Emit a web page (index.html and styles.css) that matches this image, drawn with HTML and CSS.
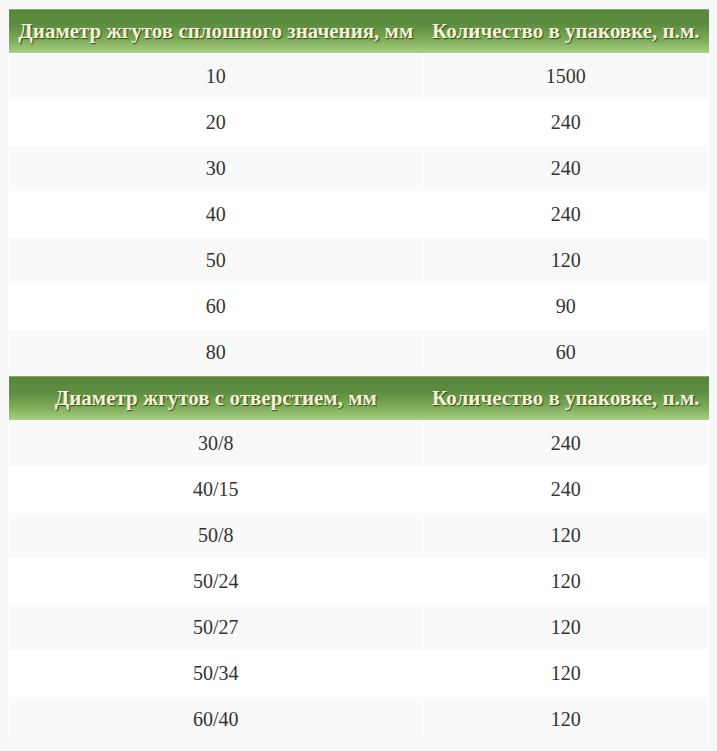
FILE: index.html
```html
<!DOCTYPE html>
<html lang="ru">
<head>
<meta charset="utf-8">
<title>Жгуты</title>
<link rel="stylesheet" href="styles.css">
</head>
<body>
<table class="spec">
  <tr class="head"><th>Диаметр жгутов сплошного значения, мм</th><th>Количество в упаковке, п.м.</th></tr>
  <tr class="odd"><td>10</td><td>1500</td></tr>
  <tr class="even"><td>20</td><td>240</td></tr>
  <tr class="odd"><td>30</td><td>240</td></tr>
  <tr class="even"><td>40</td><td>240</td></tr>
  <tr class="odd"><td>50</td><td>120</td></tr>
  <tr class="even"><td>60</td><td>90</td></tr>
  <tr class="odd"><td>80</td><td>60</td></tr>
  <tr class="head"><th>Диаметр жгутов с отверстием, мм</th><th>Количество в упаковке, п.м.</th></tr>
  <tr class="odd"><td>30/8</td><td>240</td></tr>
  <tr class="even"><td>40/15</td><td>240</td></tr>
  <tr class="odd"><td>50/8</td><td>120</td></tr>
  <tr class="even"><td>50/24</td><td>120</td></tr>
  <tr class="odd"><td>50/27</td><td>120</td></tr>
  <tr class="even"><td>50/34</td><td>120</td></tr>
  <tr class="odd"><td>60/40</td><td>120</td></tr>
</table>
</body>
</html>
```
FILE: styles.css
```css
html, body {
  margin: 0;
  padding: 0;
  background: #f7f7f7;
}
body {
  padding: 8px;
  font-family: "Liberation Serif", "Times New Roman", serif;
  color: #333;
}
.spec {
  border-collapse: collapse;
  width: 701px;
  background: #fff;
}
.spec th, .spec td {
  text-align: center;
  padding: 0 7px;
  border: 1px solid #fff;
}
.head th {
  height: 44px;
  font-size: 21px;
  font-weight: bold;
  color: #f4f2d6;
  text-shadow: 1px 1px 1px #2f4a1c;
  background: linear-gradient(to bottom, #56863a 0%, #5d8d40 35%, #7eab5a 70%, #a9d283 100%);
  border-left: none;
  border-right: none;
  white-space: nowrap;
}
.spec td {
  height: 45px;
  font-size: 20px;
}
.odd td { background: #f9f9f9; }
.even td { background: #ffffff; }
```
